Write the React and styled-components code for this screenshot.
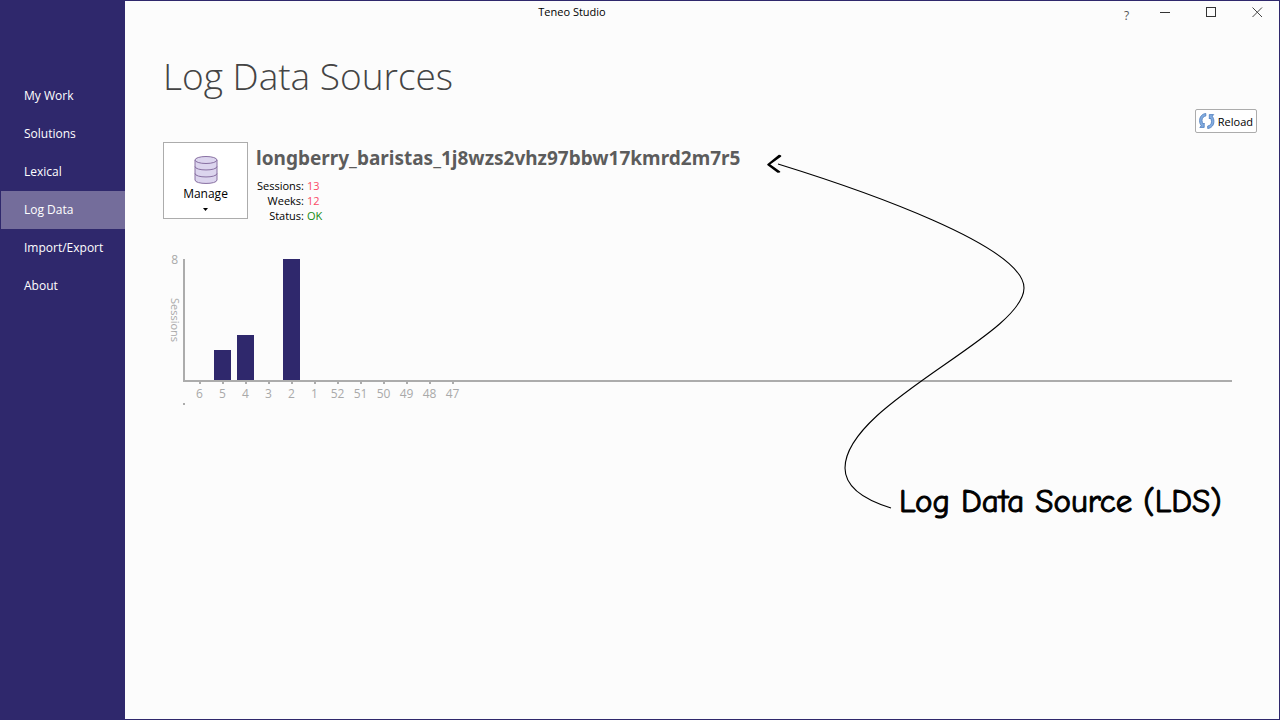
import React from 'react'
import styled, { createGlobalStyle } from 'styled-components'

const navItems = ['My Work', 'Solutions', 'Lexical', 'Log Data', 'Import/Export', 'About']

const weeks = [
  { week: 6, sessions: 0 },
  { week: 5, sessions: 2 },
  { week: 4, sessions: 3 },
  { week: 3, sessions: 0 },
  { week: 2, sessions: 8 },
  { week: 1, sessions: 0 },
  { week: 52, sessions: 0 },
  { week: 51, sessions: 0 },
  { week: 50, sessions: 0 },
  { week: 49, sessions: 0 },
  { week: 48, sessions: 0 },
  { week: 47, sessions: 0 },
]
const maxSessions = 8

const App = () => {
  return (
    <>
      <GlobalStyle />
      <Window>
        <Sidebar>
          {navItems.map((item) => (
            <NavLink key={item} href="#" $active={item === 'Log Data'}>{item}</NavLink>
          ))}
        </Sidebar>
        <Main>
          <TitleBar>
            <AppName>Teneo Studio</AppName>
            <HelpButton aria-label="Help">?</HelpButton>
            <WindowButton aria-label="Minimize">
              <svg width="11" height="11" viewBox="0 0 11 11"><path d="M0 5.5H10" stroke="#333" /></svg>
            </WindowButton>
            <WindowButton aria-label="Maximize">
              <svg width="11" height="11" viewBox="0 0 11 11"><rect x="0.5" y="0.5" width="9" height="9" fill="none" stroke="#333" /></svg>
            </WindowButton>
            <WindowButton aria-label="Close">
              <svg width="11" height="11" viewBox="0 0 11 11"><path d="M.5 .5L10 10M10 .5L.5 10" stroke="#444" /></svg>
            </WindowButton>
          </TitleBar>
          <Content>
            <Heading>Log Data Sources</Heading>
            <Toolbar>
              <ReloadButton>
                <ReloadIcon />
                Reload
              </ReloadButton>
            </Toolbar>
            <Source>
              <ManageButton>
                <DatabaseIcon />
                <span>Manage</span>
                <svg width="5" height="3" viewBox="0 0 5 3"><path d="M0 0H5L2.5 3Z" fill="#000" /></svg>
              </ManageButton>
              <div>
                <SourceName>longberry_baristas_1j8wzs2vhz97bbw17kmrd2m7r5</SourceName>
                <Stats>
                  <dt>Sessions:</dt>
                  <StatValue>13</StatValue>
                  <dt>Weeks:</dt>
                  <StatValue>12</StatValue>
                  <dt>Status:</dt>
                  <StatValue $ok>OK</StatValue>
                </Stats>
              </div>
            </Source>
            <Chart>
              <YAxis>
                <AxisMax>{maxSessions}</AxisMax>
                <AxisTitle>Sessions</AxisTitle>
              </YAxis>
              <PlotArea>
                <Plot>
                  {weeks.map((w) => (
                    <Slot key={w.week}>
                      <Bar style={{ height: `${(w.sessions / maxSessions) * 100}%` }} />
                    </Slot>
                  ))}
                </Plot>
                <XAxis>
                  {weeks.map((w) => (
                    <WeekLabel key={w.week}>{w.week}</WeekLabel>
                  ))}
                </XAxis>
                <AxisEnd />
              </PlotArea>
            </Chart>
          </Content>
          <Arrow width="270" height="364" viewBox="760 150 270 364" aria-hidden="true">
            <path d="M778 164C862 190 1024 246 1024 288C1024 335 845 404 845 468C845 486 862 499 891 508" fill="none" stroke="#000" strokeWidth="1.1" />
            <path d="M780.5 156L769 164.300L779.500 171.800L778 172L768 164.500L779 155.500Z" fill="#000" stroke="#000" strokeWidth="1.600" strokeLinejoin="round" />
          </Arrow>
          <Note>Log Data Source (LDS)</Note>
        </Main>
      </Window>
    </>
  )
}

const DatabaseIcon = () => (
  <svg width="24" height="28" viewBox="0 0 24 28" fill="#dcd5ee" stroke="#8870a2">
    <path d="M1 4V24C1 28.600 23 28.600 23 24V4" />
    <ellipse cx="12" cy="4" rx="11" ry="3.500" />
    <path d="M1 10.500C1 15.100 23 15.100 23 10.500M1 17.500C1 22.100 23 22.100 23 17.500" fill="none" />
  </svg>
)

const ReloadIcon = () => (
  <svg width="16" height="16" viewBox="0 0 16 16" fill="#84ade0" stroke="#4a7abb" strokeWidth="0.8">
    <path d="M6.800 .5C3 .8 .6 4 .6 7.500C.6 10 1.300 11.500 2.300 12.800L.8 14.400H5.200V10L4.200 11C3.400 10 3 8.800 3 7.300C3 5 4.600 3.300 6.800 3Z" />
    <path d="M8.700 15.500C12.500 15.200 14.900 12 14.900 8.500C14.900 6 14.200 4.500 13.200 3.200L14.700 1.600H10.300V6L11.300 5C12.100 6 12.500 7.200 12.500 8.700C12.500 11 10.900 12.700 8.700 13Z" />
  </svg>
)

const GlobalStyle = createGlobalStyle`
*{
    box-sizing: border-box;
}
body{
    margin: 0;
    background: #fcfcfc;
    font-family: "Open Sans", "Noto Sans", sans-serif;
    font-size: 11px;
    color: #000;
}
button{
    font: inherit;
    color: inherit;
    padding: 0;
    cursor: pointer;
}
svg{
    display: block;
}
`
const Window = styled.div`
display: flex;
min-height: 100vh;
border: 1px solid #2f286c;
`
const Sidebar = styled.nav`
flex: 0 0 124px;
padding-top: 76px;
background: #2f286c;
`
const NavLink = styled.a`
display: block;
padding-left: 23px;
font-size: 12px;
line-height: 38px;
color: #fff;
text-decoration: none;
background: ${(props) => (props.$active ? '#746d9b' : 'transparent')};
`
const Main = styled.main`
position: relative;
flex: 1;
min-width: 0;
`
const TitleBar = styled.header`
display: flex;
height: 22px;
`
const AppName = styled.div`
flex: 1;
padding-right: 90px;
text-align: center;
line-height: 22px;
`
const WindowButton = styled.button`
display: flex;
align-items: center;
justify-content: center;
width: 46px;
padding-left: 3px;
border: none;
background: transparent;
`
const HelpButton = styled(WindowButton)`
width: 32px;
align-items: flex-end;
font-size: 12px;
line-height: 14px;
color: #555;
`
const Content = styled.div`
padding: 27px 22px 0 38px;
`
const Heading = styled.h1`
margin: 0;
font-size: 37px;
font-weight: 300;
line-height: 52px;
color: #444;
`
const Toolbar = styled.div`
display: flex;
justify-content: flex-end;
padding: 7px 0 9px;
`
const ReloadButton = styled.button`
display: flex;
align-items: center;
gap: 3px;
height: 24px;
padding: 0 3px;
border: 1px solid #acacac;
border-radius: 2px;
background: #fff;
`
const Source = styled.section`
display: flex;
gap: 8px;
`
const ManageButton = styled.button`
display: flex;
flex-direction: column;
align-items: center;
width: 85px;
height: 77px;
padding-top: 13px;
border: 1px solid #acacac;
background: #fff;
span{
    font-size: 12px;
    line-height: 20px;
    margin-bottom: 4px;
}
`
const SourceName = styled.h2`
margin: 0;
font-family: "Noto Sans", sans-serif;
font-size: 19px;
font-weight: 700;
line-height: 32px;
color: #5c5c5c;
`
const Stats = styled.dl`
display: grid;
grid-template-columns: 48px auto;
justify-content: start;
column-gap: 3px;
margin: 4px 0 0;
line-height: 15px;
dt{
    justify-self: end;
}
`
const StatValue = styled.dd`
margin: 0;
color: ${(props) => (props.$ok ? '#128a12' : '#fa4a66')};
`
const Chart = styled.section`
display: flex;
margin-top: 36px;
padding-right: 25px;
color: #a9a9a9;
`
const YAxis = styled.div`
display: flex;
flex-direction: column;
align-items: flex-end;
width: 20px;
height: 121px;
`
const AxisMax = styled.div`
width: 100%;
padding-right: 5px;
text-align: right;
font-size: 12px;
line-height: 1px;
`
const AxisTitle = styled.div`
margin: auto 0;
writing-mode: vertical-rl;
line-height: 16px;
`
const PlotArea = styled.div`
flex: 1;
`
const Plot = styled.div`
display: flex;
height: 123px;
padding-left: 3px;
border-left: 2px solid #acacac;
border-bottom: 2px solid #acacac;
`
const Slot = styled.div`
display: flex;
align-items: flex-end;
justify-content: center;
width: 23px;
`
const Bar = styled.div`
width: 17px;
background: #2f286c;
`
const XAxis = styled.div`
display: flex;
padding-left: 5px;
`
const WeekLabel = styled.div`
width: 23px;
text-align: center;
font-size: 12px;
line-height: 19px;
&:before{
    content: "";
    display: block;
    width: 2px;
    height: 2px;
    margin: 0 auto;
    background: #acacac;
}
`
const AxisEnd = styled.div`
width: 2px;
height: 2px;
background: #acacac;
`
/* callout drawn over the page */
const Arrow = styled.svg`
position: absolute;
left: 635px;
top: 149px;
pointer-events: none;
`
const Note = styled.p`
position: absolute;
left: 774px;
top: 480px;
margin: 0;
font-family: "Comic Neue", "Comic Sans MS", Lato, sans-serif;
font-size: 33px;
line-height: 40px;
white-space: nowrap;
-webkit-text-stroke: 1px #000;
`

export default App
